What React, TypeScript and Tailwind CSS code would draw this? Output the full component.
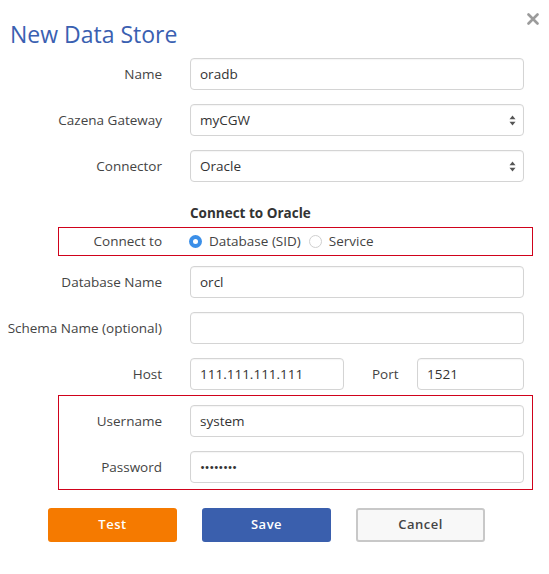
import React from 'react'

const inputCls =
  'h-[32px] rounded-[4px] border border-[#d4d4d4] bg-white px-[9px] text-[13.5px] text-[#333] outline-none shadow-[inset_0_1px_1px_rgba(0,0,0,0.04)]'

function Field({ value, type = 'text', className = 'w-[334px]' }: { value: string; type?: string; className?: string }) {
  return <input readOnly type={type} defaultValue={value} className={`${inputCls} ${className}`} />
}

function SelectBox({ value }: { value: string }) {
  return (
    <div className={`${inputCls} w-[334px] flex items-center justify-between pr-[7px]`}>
      <span>{value}</span>
      <svg width="7" height="11" viewBox="0 0 7 11" className="text-[#555]">
        <path d="M3.5 0.5 L6.5 4.2 L0.5 4.2 Z" fill="currentColor" />
        <path d="M3.5 10.5 L6.5 6.8 L0.5 6.8 Z" fill="currentColor" />
      </svg>
    </div>
  )
}

function Row({ label, boxed, children }: { label: string; boxed?: boolean; children: React.ReactNode }) {
  return (
    <div className="flex items-center h-[32px]">
      <div className={`${boxed ? 'w-[103px]' : 'w-[162px]'} text-right text-[13.5px] text-[#444] whitespace-nowrap`}>{label}</div>
      <div className="ml-[28px] flex items-center">{children}</div>
    </div>
  )
}

function Radio({ checked, label }: { checked?: boolean; label: string }) {
  return (
    <div className="flex items-center gap-[7px]">
      {checked ? (
        <span className="w-[13px] h-[13px] rounded-full bg-[#3b8fe8] flex items-center justify-center">
          <span className="w-[5px] h-[5px] rounded-full bg-white" />
        </span>
      ) : (
        <span className="w-[13px] h-[13px] rounded-full border border-[#cfcfcf] bg-white" />
      )}
      <span className="text-[13.5px] text-[#444]">{label}</span>
    </div>
  )
}

export default function App() {
  return (
    <div className="relative w-[549px] h-[574px] bg-white font-['Open_Sans',sans-serif] text-[#333]">
      <button className="absolute left-[527px] top-[13px] w-[12px] h-[12px]" aria-label="Close">
        <svg width="12" height="12" viewBox="0 0 12 12">
          <path d="M1.5 1.5 L10.5 10.5 M10.5 1.5 L1.5 10.5" stroke="#9b9b9b" strokeWidth="2.6" strokeLinecap="round" />
        </svg>
      </button>

      <h1 className="pl-[10px] pt-[19px] text-[23px] leading-[30px] text-[#3a60b1]">New Data Store</h1>

      <div className="mt-[9px]">
        <Row label="Name"><Field value="oradb" /></Row>
        <div className="mt-[14px]">
          <Row label="Cazena Gateway"><SelectBox value="myCGW" /></Row>
        </div>
        <div className="mt-[14px]">
          <Row label="Connector"><SelectBox value="Oracle" /></Row>
        </div>

        <div className="mt-[21px] pl-[190px] h-[20px] leading-[20px] text-[13.5px] font-bold text-[#333]">Connect to Oracle</div>

        <div className="mt-[4px] ml-[58px] w-[475px] h-[29px] border border-[#d0021b] flex items-center">
          <div className="w-[103px] text-right text-[13.5px] text-[#444]">Connect to</div>
          <div className="ml-[27px] flex items-center gap-[8px]">
            <Radio checked label="Database (SID)" />
            <Radio label="Service" />
          </div>
        </div>

        <div className="mt-[10px]">
          <Row label="Database Name"><Field value="orcl" /></Row>
        </div>
        <div className="mt-[14px]">
          <Row label="Schema Name (optional)"><Field value="" /></Row>
        </div>
        <div className="mt-[14px]">
          <Row label="Host">
            <div className="w-[334px] flex items-center">
              <Field value="111.111.111.111" className="w-[154px]" />
              <span className="ml-[28px] text-[13.5px] text-[#444]">Port</span>
              <Field value="1521" className="ml-auto w-[107px]" />
            </div>
          </Row>
        </div>

        <div className="mt-[5px] ml-[58px] w-[475px] border border-[#d0021b] pt-[9px] pb-[6px]">
          <Row label="Username" boxed><Field value="system" /></Row>
          <div className="mt-[14px]">
            <Row label="Password" boxed><Field value="oraclepw" type="password" className="w-[334px] text-[11px] tracking-[-0.5px]" /></Row>
          </div>
        </div>

        <div className="mt-[18px] pl-[48px] flex gap-[25px]">
          <button className="w-[129px] h-[34px] rounded-[3px] bg-[#f57a00] text-white text-[13px] font-semibold tracking-[0.5px]">Test</button>
          <button className="w-[129px] h-[34px] rounded-[3px] bg-[#3a5fad] text-white text-[13px] font-semibold tracking-[0.5px]">Save</button>
          <button className="w-[129px] h-[34px] rounded-[3px] border-2 border-[#c8c8c8] bg-[#f8f8f8] text-[#444] text-[13px] font-semibold tracking-[0.5px]">Cancel</button>
        </div>
      </div>
    </div>
  )
}
